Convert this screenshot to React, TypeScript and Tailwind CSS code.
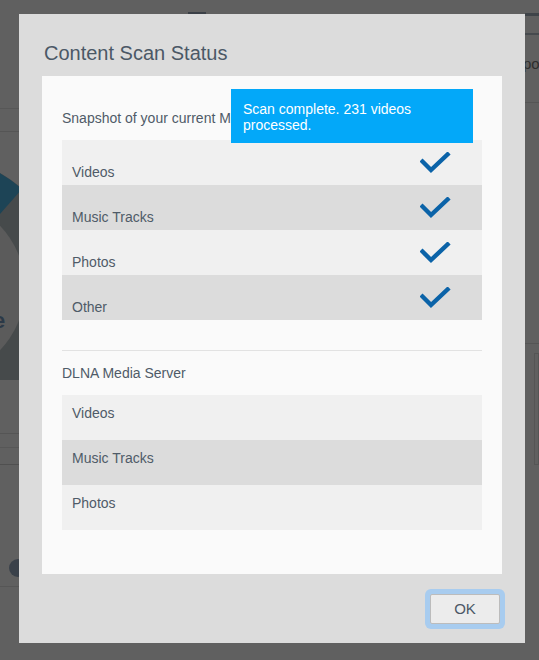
import React from "react";

const snapshotRows = ["Videos", "Music Tracks", "Photos", "Other"];
const dlnaRows = ["Videos", "Music Tracks", "Photos"];

const Check = () => (
  <svg width="32" height="24" viewBox="0 0 32 24" className="mt-[12px] mr-[30px] shrink-0" aria-hidden="true">
    <path d="M2.5 9.5 L11 18 L27.5 2.5" fill="none" stroke="#0b63a8" strokeWidth="4.4" strokeLinecap="square" />
  </svg>
);

// dimmed page that sits behind the modal overlay
const Background = () => (
  <div className="flex h-[660px] w-[539px] bg-[#606060]">
    <div className="flex w-[19px] shrink-0 flex-col">
      <div className="mt-[108px] h-px bg-[#575757]" />
      <div className="mt-[22px] h-px bg-[#555]" />
      <div className="relative mt-[28px] h-[220px]">
        <svg width="20" height="220" viewBox="0 0 20 220">
          <circle cx="-65" cy="128" r="132" fill="#464a4b" />
          <path d="M -65 128 L -65 -4 A 132 132 0 0 1 22 29 Z" fill="#1d4456" />
          <circle cx="-65" cy="128" r="90" fill="#5b5b5b" />
        </svg>
        <span className="absolute left-[-7px] top-[144px] text-[22px] font-bold text-[#2b3947]">e</span>
      </div>
      <div className="mt-[53px] h-px bg-[#555]" />
      <div className="mt-[13px] h-px bg-[#575757]" />
      <div className="mt-[16px] h-px bg-[#505050]" />
      <div className="ml-[9px] mt-[94px] h-[18px] w-[18px] shrink-0 rounded-full bg-[#3a414a]" />
      <div className="mt-[9px] h-px bg-[#565656]" />
    </div>
    <div className="flex w-[506px] shrink-0 flex-col">
      <div className="ml-[169px] mt-[12px] h-[3px] w-[18px] bg-[#3b4047]" />
    </div>
    <div className="flex w-[14px] shrink-0 flex-col overflow-hidden">
      <div className="mt-[13px] h-[3px] bg-[#3f4449]" />
      <div className="mt-[17px] h-[2px] bg-[#464a4e]" />
      <span className="-ml-[2px] mt-[20px] whitespace-nowrap text-[15px] leading-[18px] text-[#2e2e2e]">poi</span>
      <div className="mt-[29px] h-px bg-[#555]" />
      <div className="mt-[240px] h-px bg-[#555]" />
      <div className="ml-[9px] mt-[9px] h-[112px] border border-[#555]" />
    </div>
  </div>
);

export default function App() {
  return (
    <div className="relative h-[660px] w-[539px] overflow-hidden font-['Liberation_Sans',Arial,sans-serif] text-[#4f5b68]">
      <Background />
      <div className="absolute inset-0 flex items-start pl-[19px] pt-[14px]">
        <div className="flex h-[629px] w-[506px] flex-col bg-[#dcdcdc] px-[23px] pt-[27px]">
          <h2 className="ml-[2px] text-[20px] leading-[24px] text-[#4b5866]">Content Scan Status</h2>

          <div className="relative mt-[11px] h-[498px] w-[460px] bg-[#fafafa] px-[20px] pt-[34px]">
            <p className="text-[14px] leading-[17px]">Snapshot of your current Media Library</p>

            <div className="mt-[13px] flex flex-col">
              {snapshotRows.map((row, i) => (
                <div
                  key={row}
                  className={
                    i % 2 === 0
                      ? "flex h-[45px] items-start justify-between bg-[#f0f0f0] pl-[10px]"
                      : "flex h-[45px] items-start justify-between bg-[#dcdcdc] pl-[10px]"
                  }
                >
                  <span className="pt-[24px] text-[14px] leading-[17px]">{row}</span>
                  <Check />
                </div>
              ))}
            </div>

            <div className="mt-[30px] h-px bg-[#e2e2e2]" />

            <p className="mt-[14px] text-[14px] leading-[17px]">DLNA Media Server</p>

            <div className="mt-[13px] flex flex-col">
              {dlnaRows.map((row, i) => (
                <div
                  key={row}
                  className={
                    i % 2 === 0
                      ? "h-[45px] bg-[#f0f0f0] pl-[10px] pt-[6px]"
                      : "h-[45px] bg-[#dcdcdc] pl-[10px] pt-[6px]"
                  }
                >
                  <span className="text-[14px] leading-[17px]">{row}</span>
                </div>
              ))}
            </div>

            {/* toast */}
            <div className="absolute left-[189px] top-[13px] h-[54px] w-[242px] bg-[#03a8f9] px-[12px] pt-[12px] text-[14px] leading-[16px] text-white">
              Scan complete. 231 videos processed.
            </div>
          </div>

          <div className="mt-[20px] flex justify-end pr-[2px]">
            <button className="h-[30px] w-[70px] rounded-[2px] border border-[#bcbcbc] bg-[#ececec] text-[15px] text-[#4b5866] ring-[5px] ring-[#a8ccef]">
              OK
            </button>
          </div>
        </div>
      </div>
    </div>
  );
}
